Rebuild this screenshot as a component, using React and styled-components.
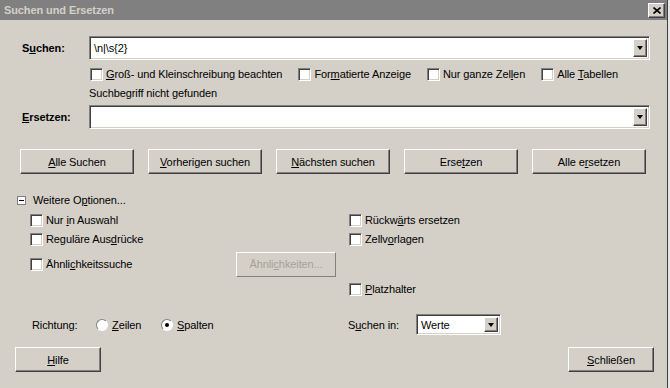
import React from 'react';
import styled, { createGlobalStyle } from 'styled-components';

const GlobalStyle = createGlobalStyle`
  html, body {
    margin: 0;
    padding: 0;
    background: #e6e6e6;
  }
  body {
    font-family: "Liberation Sans", Arial, sans-serif;
    font-size: 11px;
    letter-spacing: -0.1px;
    color: #000;
  }
`;

const Window = styled.div`
  width: 667px;
  height: 388px;
  background: #d4d0c8;
  border-right: 1px solid #404040;
  display: flex;
  flex-direction: column;
  overflow: hidden;
`;

const TitleBar = styled.div`
  height: 20px;
  background: #808080;
  display: flex;
  align-items: center;
  justify-content: space-between;
  padding: 0 2px 0 4px;
`;

const Title = styled.span`
  color: #d4d0c8;
  font-weight: bold;
  font-size: 11px;
`;

const CloseButton = styled.div`
  width: 15px;
  height: 13px;
  background: #d4d0c8;
  border: 1px solid;
  border-color: #fff #404040 #404040 #fff;
  box-shadow: inset -1px -1px #808080;
  display: flex;
  align-items: center;
  justify-content: center;
`;

const U = styled.span`
  text-decoration: underline;
`;

const FieldRow = styled.div`
  display: flex;
  align-items: center;
  padding-left: 22px;
  margin-top: ${(p) => p.$top}px;
`;

const FieldLabel = styled.label`
  width: 67px;
  font-weight: bold;
  font-size: 11px;
`;

const Combo = styled.div`
  width: ${(p) => p.$width}px;
  height: ${(p) => p.$height}px;
  box-sizing: border-box;
  background: #fff;
  border: 1px solid;
  border-color: #808080 #fff #fff #808080;
  box-shadow: inset 1px 1px #404040, inset -1px -1px #d4d0c8;
  display: flex;
  align-items: center;
  justify-content: space-between;
  padding: 2px 2px 2px 4px;
`;

const ComboText = styled.span`
  font-size: 11px;
`;

const DropButton = styled.div`
  width: 14px;
  height: ${(p) => p.$height}px;
  box-sizing: border-box;
  background: #d4d0c8;
  border: 1px solid;
  border-color: #fff #404040 #404040 #fff;
  box-shadow: inset -1px -1px #808080;
  display: flex;
  align-items: center;
  justify-content: center;
`;

const Arrow = styled.div`
  width: 0;
  height: 0;
  border-left: 3px solid transparent;
  border-right: 3px solid transparent;
  border-top: 4px solid #000;
`;

const CheckRow = styled.div`
  display: flex;
  align-items: center;
  gap: 16px;
  padding-left: 90px;
  margin-top: 6px;
  height: 16px;
`;

const CheckItem = styled.label`
  display: flex;
  align-items: center;
  gap: 3px;
  white-space: nowrap;
`;

const Box = styled.span`
  width: 13px;
  height: 13px;
  box-sizing: border-box;
  background: #fff;
  border: 1px solid;
  border-color: #808080 #fff #fff #808080;
  box-shadow: inset 1px 1px #404040, inset -1px -1px #d4d0c8;
  flex-shrink: 0;
`;

const Status = styled.div`
  padding-left: 89px;
  height: 16px;
  line-height: 16px;
  margin-top: 3px;
`;

const ButtonRow = styled.div`
  display: flex;
  gap: 14px;
  padding-left: 20px;
  margin-top: 20px;
`;

const Button = styled.div`
  width: ${(p) => p.$width || 114}px;
  height: 25px;
  box-sizing: border-box;
  background: #d4d0c8;
  border: 1px solid;
  border-color: ${(p) => (p.$disabled ? '#fff #808080 #808080 #fff' : '#fff #404040 #404040 #fff')};
  box-shadow: ${(p) => (p.$disabled ? 'none' : 'inset -1px -1px #808080')};
  display: flex;
  align-items: center;
  justify-content: center;
  color: ${(p) => (p.$disabled ? '#a4a19a' : '#000')};
  white-space: nowrap;
`;

const Expander = styled.div`
  display: flex;
  align-items: center;
  gap: 7px;
  padding-left: 17px;
  margin-top: 19px;
  height: 14px;
`;

const ExpandBox = styled.span`
  width: 9px;
  height: 9px;
  box-sizing: border-box;
  border: 1px solid #808080;
  background: #fff;
  display: flex;
  align-items: center;
  justify-content: center;
  &::after {
    content: '';
    width: 5px;
    height: 1px;
    background: #000;
  }
`;

const Options = styled.div`
  display: grid;
  grid-template-columns: 319px 1fr;
  grid-template-rows: 16px 16px 25px 16px;
  row-gap: 3px;
  padding-left: 30px;
  margin-top: 5px;
  & > :nth-child(n + 5) {
    margin-top: 3px;
  }
  & > :nth-child(n + 7) {
    margin-top: 6px;
  }
`;

const Cell = styled.div`
  display: flex;
  align-items: center;
`;

const SimilarLabel = styled.div`
  width: 206px;
  display: flex;
`;

const BottomRow = styled.div`
  display: flex;
  align-items: center;
  margin-top: 20px;
  height: 21px;
`;

const Direction = styled.div`
  display: flex;
  align-items: center;
  width: 316px;
  padding-left: 32px;
`;

const DirLabel = styled.span`
  width: 64px;
`;

const RadioItem = styled.label`
  display: flex;
  align-items: center;
  gap: 4px;
  width: ${(p) => p.$width}px;
`;

const Radio = styled.span`
  width: 12px;
  height: 12px;
  box-sizing: border-box;
  border-radius: 50%;
  background: #fff;
  border: 1px solid;
  border-color: #808080 #fff #fff #808080;
  display: flex;
  align-items: center;
  justify-content: center;
  &::after {
    content: '';
    display: ${(p) => (p.$checked ? 'block' : 'none')};
    width: 4px;
    height: 4px;
    border-radius: 50%;
    background: #000;
  }
`;

const SearchIn = styled.div`
  display: flex;
  align-items: center;
`;

const SearchInLabel = styled.span`
  width: 68px;
`;

const Footer = styled.div`
  display: flex;
  justify-content: space-between;
  padding: 0 13px 0 15px;
  margin-top: 12px;
`;

const Check = ({ children }) => (
  <CheckItem>
    <Box />
    <span>{children}</span>
  </CheckItem>
);

const App = () => {
  return (
    <>
      <GlobalStyle />
      <Window>
        <TitleBar>
          <Title>Suchen und Ersetzen</Title>
          <CloseButton>
            <svg width="8" height="7" viewBox="0 0 8 7">
              <path d="M0.5 0.5 L7.5 6.5 M7.5 0.5 L0.5 6.5" stroke="#000" strokeWidth="1.6" />
            </svg>
          </CloseButton>
        </TitleBar>

        <FieldRow $top={16}>
          <FieldLabel>S<U>u</U>chen:</FieldLabel>
          <Combo $width={561} $height={24}>
            <ComboText>\n|\s{'{2}'}</ComboText>
            <DropButton $height={18}><Arrow /></DropButton>
          </Combo>
        </FieldRow>

        <CheckRow>
          <Check><U>G</U>roß- und Kleinschreibung beachten</Check>
          <Check>For<U>m</U>atierte Anzeige</Check>
          <Check>Nur ganze Zel<U>l</U>en</Check>
          <Check>Alle <U>T</U>abellen</Check>
        </CheckRow>

        <Status>Suchbegriff nicht gefunden</Status>

        <FieldRow $top={4}>
          <FieldLabel><U>E</U>rsetzen:</FieldLabel>
          <Combo $width={561} $height={24}>
            <ComboText />
            <DropButton $height={18}><Arrow /></DropButton>
          </Combo>
        </FieldRow>

        <ButtonRow>
          <Button><span><U>A</U>lle Suchen</span></Button>
          <Button><span><U>V</U>orherigen suchen</span></Button>
          <Button><span><U>N</U>ächsten suchen</span></Button>
          <Button><span>Erse<U>t</U>zen</span></Button>
          <Button><span>Alle e<U>r</U>setzen</span></Button>
        </ButtonRow>

        <Expander>
          <ExpandBox />
          <span>Weitere O<U>p</U>tionen...</span>
        </Expander>

        <Options>
          <Cell><Check>Nur <U>i</U>n Auswahl</Check></Cell>
          <Cell><Check>Rückw<U>ä</U>rts ersetzen</Check></Cell>
          <Cell><Check>Reguläre Aus<U>d</U>rücke</Check></Cell>
          <Cell><Check>Zellv<U>o</U>rlagen</Check></Cell>
          <Cell>
            <SimilarLabel><Check>Ähnli<U>c</U>hkeitssuche</Check></SimilarLabel>
            <Button $width={100} $disabled><span>Ähnli<U>c</U>hkeiten...</span></Button>
          </Cell>
          <Cell />
          <Cell />
          <Cell><Check><U>P</U>latzhalter</Check></Cell>
        </Options>

        <BottomRow>
          <Direction>
            <DirLabel>Richtung:</DirLabel>
            <RadioItem $width={65}>
              <Radio />
              <span><U>Z</U>eilen</span>
            </RadioItem>
            <RadioItem>
              <Radio $checked />
              <span><U>S</U>palten</span>
            </RadioItem>
          </Direction>
          <SearchIn>
            <SearchInLabel>S<U>u</U>chen in:</SearchInLabel>
            <Combo $width={85} $height={21}>
              <ComboText>Werte</ComboText>
              <DropButton $height={15}><Arrow /></DropButton>
            </Combo>
          </SearchIn>
        </BottomRow>

        <Footer>
          <Button $width={86}><span><U>H</U>ilfe</span></Button>
          <Button $width={86}><span><U>S</U>chließen</span></Button>
        </Footer>
      </Window>
    </>
  );
};

export default App;
